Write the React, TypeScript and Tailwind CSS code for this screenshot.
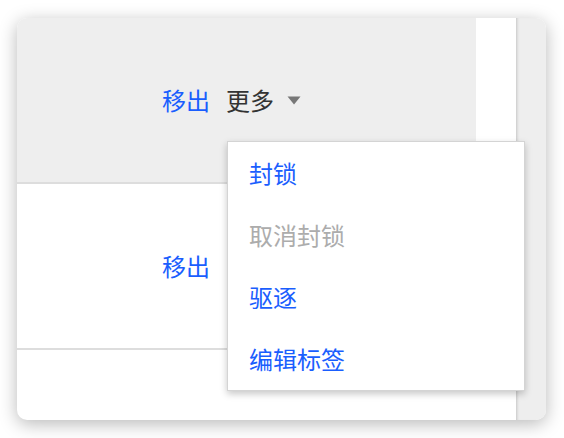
const menuItems = [
  { label: "封锁", disabled: false },
  { label: "取消封锁", disabled: true },
  { label: "驱逐", disabled: false },
  { label: "编辑标签", disabled: false },
];

function Caret() {
  return (
    <svg width="14" height="9" viewBox="0 0 14 9" className="ml-[13px] mt-[1px]">
      <path d="M0.5 0.5 H13.5 L7 8.5 Z" fill="#777777" />
    </svg>
  );
}

function DropdownMenu() {
  return (
    <div className="absolute left-[210px] top-[123px] w-[298px] border border-[#d4d4d4] bg-white shadow-[0_3px_7px_rgba(0,0,0,0.22)]">
      <ul className="flex flex-col">
        {menuItems.map((item) => (
          <li key={item.label}>
            <button
              type="button"
              disabled={item.disabled}
              className={`flex h-[62px] w-full items-center pl-[21px] text-left ${
                item.disabled ? "text-[#acacac]" : "text-[#1a5efe]"
              }`}
            >
              {item.label}
            </button>
          </li>
        ))}
      </ul>
    </div>
  );
}

export default function App() {
  return (
    <div
      className="min-h-screen bg-white pl-[17px] pt-[18px] text-[24px] leading-none"
      style={{ fontFamily: '"Noto Sans CJK SC", "Noto Sans", sans-serif' }}
    >
      <div className="relative flex h-[402px] w-[529px] overflow-hidden rounded-[10px] bg-white shadow-[0_4px_18px_rgba(0,0,0,0.28)]">
        <div className="flex w-[459px] flex-col">
          <div className="flex h-[166px] items-center border-b-2 border-[#dddddd] bg-[#eeeeee] pl-[145px]">
            <span className="text-[#1a5efe]">移出</span>
            <span className="ml-[16px] text-[#333333]">更多</span>
            <Caret />
          </div>
          <div className="flex h-[166px] items-center border-b-2 border-[#dddddd] pl-[145px]">
            <span className="text-[#1a5efe]">移出</span>
          </div>
          <div className="flex-1" />
        </div>
        <div className="w-[40px] bg-white" />
        <div className="w-[30px] bg-[#eeeeee] shadow-[inset_3px_0_3px_-2px_rgba(0,0,0,0.18)]" />
        <DropdownMenu />
      </div>
    </div>
  );
}
